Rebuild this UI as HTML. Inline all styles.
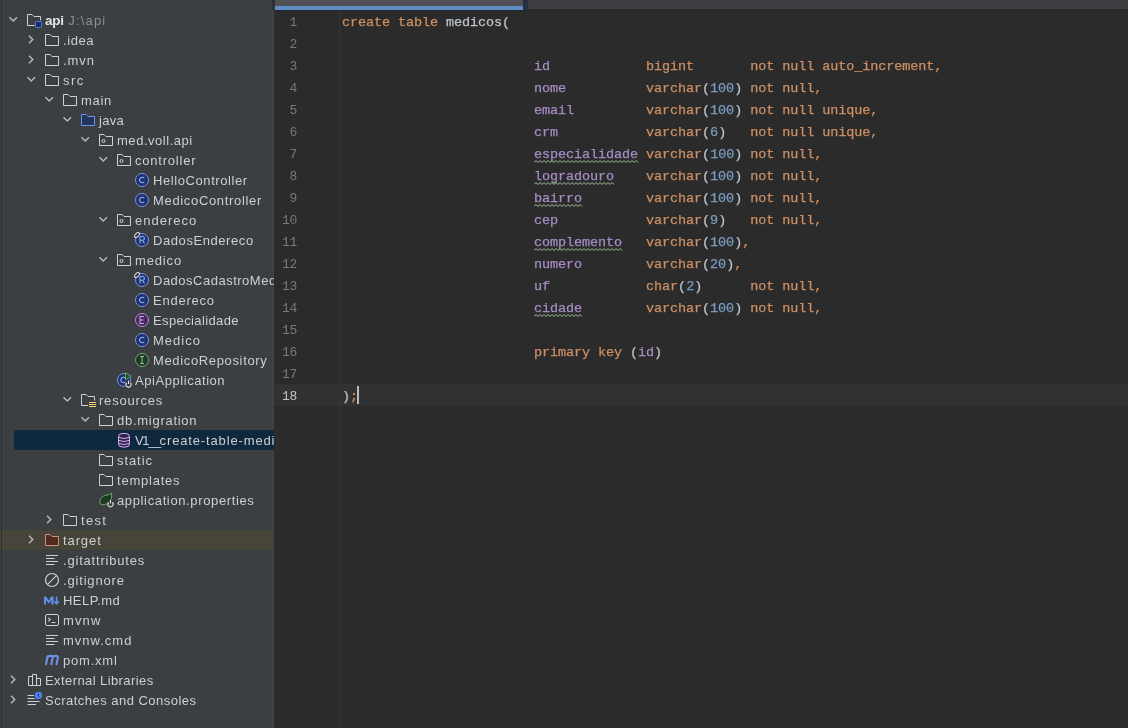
<!DOCTYPE html>
<html><head><meta charset="utf-8"><style>
*{box-sizing:border-box}
html,body{margin:0;padding:0}
body{width:1128px;height:728px;overflow:hidden;background:#2b2b2b;position:relative;font-family:"Liberation Sans",sans-serif}
#side{position:absolute;left:0;top:0;width:274px;height:728px;background:#3c3f41;overflow:hidden;will-change:transform}
#side .edge{position:absolute;left:1px;top:0;width:1px;height:728px;background:#2e3134}
#div{position:absolute;left:272px;top:0;width:2px;height:728px;background:#404142}
.row{position:absolute;left:0;width:274px;height:20px}
.ch{position:absolute;top:4px;width:12px;height:12px}
.ch svg,.ic svg{display:block}
.ic{position:absolute;top:2px;width:16px;height:16px}
.tx{position:absolute;top:1px;height:20px;line-height:20px;font-size:13px;letter-spacing:0.5px;color:#cdcfd3;white-space:nowrap}
.tx.b{font-weight:bold;font-size:13.5px;letter-spacing:-0.3px;color:#e2e4e8}
.ex{color:#8c8f94;font-weight:normal;font-size:13px;letter-spacing:1.15px;margin-left:0px}
.sel{position:absolute;left:14px;top:430px;width:264px;height:20px;background:#0e293d;border-radius:2px}
.tgt{position:absolute;left:0;top:530px;width:274px;height:20px;background:#47443a}
#tabs{position:absolute;left:274px;top:0;width:854px;height:9px;background:#3d3f42}
#tab{position:absolute;left:275px;top:0;width:253px;height:10px;background:#25303c}
#tabf{position:absolute;left:275px;top:0;width:248px;height:6px;background:#4f5157}
#tabline{position:absolute;left:275px;top:6px;width:248px;height:4px;background:#5f8ec6}
#ed{position:absolute;left:274px;top:9px;width:854px;height:719px;background:#2b2b2b}
#ed2{position:absolute;left:275px;top:10px;width:253px;height:1px;background:#1f2630}
.gl{position:absolute;left:339px;top:11px;width:1px;height:719px;background:#353535}
.curline{position:absolute;left:274px;top:384px;width:854px;height:22px;background:#323232}
.ln{position:absolute;left:274px;width:23px;text-align:right;height:22px;line-height:22px;font-family:"Liberation Mono",monospace;font-size:13px;letter-spacing:-0.3px;color:#76787b}
.ln.cur{color:#c2c3c5}
.cl{position:absolute;left:342px;height:22px;line-height:22px;font-family:"Liberation Mono",monospace;font-size:13.5px;letter-spacing:-0.1px;-webkit-text-stroke:0.25px currentColor;white-space:pre;color:#a9b7c6}
.wv{position:absolute;display:block}
#edc{position:absolute;left:0;top:0;width:1128px;height:728px;will-change:transform}
.caret{position:absolute;left:357px;top:386px;width:2px;height:18px;background:#bbbbbb}
</style></head><body>
<div id="side"><div id="div"></div>
<div class="sel"></div><div class="tgt"></div>
<div class="row" style="top:10px"><div class="ch" style="left:7px"><svg width="12" height="12" viewBox="0 0 12 12"><path d="M2.5 3.25L6.25 7L10 3.25" fill="none" stroke="#b4b6ba" stroke-width="1.5"/></svg></div><div class="ic" style="left:26px"><svg width="16" height="16" viewBox="0 0 16 16"><path d="M8.5 13.5H1.5V2.5H6L8 4.5H14.5V8.5" fill="none" stroke="#ced0d6" stroke-linejoin="round"/><rect x="9.5" y="9.5" width="6" height="6" rx="1" fill="#1b2d66" stroke="#5580e0"/></svg></div><div class="tx b" style="left:45px">api<span class="ex"> J:&#92;api</span></div></div><div class="row" style="top:30px"><div class="ch" style="left:25px"><svg width="12" height="12" viewBox="0 0 12 12"><path d="M4 1.75L7.75 5.5L4 9.25" fill="none" stroke="#b4b6ba" stroke-width="1.5"/></svg></div><div class="ic" style="left:44px"><svg width="16" height="16" viewBox="0 0 16 16"><path d="M1.5 2.5H6L8 4.5H14.5V13.5H1.5Z" fill="none" stroke="#ced0d6" stroke-linejoin="round"/></svg></div><div class="tx" style="left:63px;letter-spacing:0.575px">.idea</div></div><div class="row" style="top:50px"><div class="ch" style="left:25px"><svg width="12" height="12" viewBox="0 0 12 12"><path d="M4 1.75L7.75 5.5L4 9.25" fill="none" stroke="#b4b6ba" stroke-width="1.5"/></svg></div><div class="ic" style="left:44px"><svg width="16" height="16" viewBox="0 0 16 16"><path d="M1.5 2.5H6L8 4.5H14.5V13.5H1.5Z" fill="none" stroke="#ced0d6" stroke-linejoin="round"/></svg></div><div class="tx" style="left:63px;letter-spacing:0.900px">.mvn</div></div><div class="row" style="top:70px"><div class="ch" style="left:25px"><svg width="12" height="12" viewBox="0 0 12 12"><path d="M2.5 3.25L6.25 7L10 3.25" fill="none" stroke="#b4b6ba" stroke-width="1.5"/></svg></div><div class="ic" style="left:44px"><svg width="16" height="16" viewBox="0 0 16 16"><path d="M1.5 2.5H6L8 4.5H14.5V13.5H1.5Z" fill="none" stroke="#ced0d6" stroke-linejoin="round"/></svg></div><div class="tx" style="left:63px;letter-spacing:1.500px">src</div></div><div class="row" style="top:90px"><div class="ch" style="left:43px"><svg width="12" height="12" viewBox="0 0 12 12"><path d="M2.5 3.25L6.25 7L10 3.25" fill="none" stroke="#b4b6ba" stroke-width="1.5"/></svg></div><div class="ic" style="left:62px"><svg width="16" height="16" viewBox="0 0 16 16"><path d="M1.5 2.5H6L8 4.5H14.5V13.5H1.5Z" fill="none" stroke="#ced0d6" stroke-linejoin="round"/></svg></div><div class="tx" style="left:81px;letter-spacing:0.700px">main</div></div><div class="row" style="top:110px"><div class="ch" style="left:61px"><svg width="12" height="12" viewBox="0 0 12 12"><path d="M2.5 3.25L6.25 7L10 3.25" fill="none" stroke="#b4b6ba" stroke-width="1.5"/></svg></div><div class="ic" style="left:80px"><svg width="16" height="16" viewBox="0 0 16 16"><path d="M1.5 2.5H6L8 4.5H14.5V13.5H1.5Z" fill="#25345a" stroke="#6a95ee" stroke-linejoin="round"/></svg></div><div class="tx" style="left:99px;letter-spacing:0.300px">java</div></div><div class="row" style="top:130px"><div class="ch" style="left:79px"><svg width="12" height="12" viewBox="0 0 12 12"><path d="M2.5 3.25L6.25 7L10 3.25" fill="none" stroke="#b4b6ba" stroke-width="1.5"/></svg></div><div class="ic" style="left:98px"><svg width="16" height="16" viewBox="0 0 16 16"><path d="M1.5 2.5H6L8 4.5H14.5V13.5H1.5Z" fill="none" stroke="#ced0d6" stroke-linejoin="round"/><circle cx="5.5" cy="9" r="1.5" fill="none" stroke="#ced0d6"/></svg></div><div class="tx" style="left:117px;letter-spacing:0.536px">med.voll.api</div></div><div class="row" style="top:150px"><div class="ch" style="left:97px"><svg width="12" height="12" viewBox="0 0 12 12"><path d="M2.5 3.25L6.25 7L10 3.25" fill="none" stroke="#b4b6ba" stroke-width="1.5"/></svg></div><div class="ic" style="left:116px"><svg width="16" height="16" viewBox="0 0 16 16"><path d="M1.5 2.5H6L8 4.5H14.5V13.5H1.5Z" fill="none" stroke="#ced0d6" stroke-linejoin="round"/><circle cx="5.5" cy="9" r="1.5" fill="none" stroke="#ced0d6"/></svg></div><div class="tx" style="left:135px;letter-spacing:0.778px">controller</div></div><div class="row" style="top:170px"><div class="ic" style="left:134px"><svg width="16" height="16" viewBox="0 0 16 16"><circle cx="8" cy="8" r="6.5" fill="#1f3170" stroke="#7897dc"/><path d="M10.3 6.2A2.7 2.7 0 1 0 10.3 9.8" fill="none" stroke="#8fb0f5" stroke-width="1.1"/></svg></div><div class="tx" style="left:153px;letter-spacing:0.586px">HelloController</div></div><div class="row" style="top:190px"><div class="ic" style="left:134px"><svg width="16" height="16" viewBox="0 0 16 16"><circle cx="8" cy="8" r="6.5" fill="#1f3170" stroke="#7897dc"/><path d="M10.3 6.2A2.7 2.7 0 1 0 10.3 9.8" fill="none" stroke="#8fb0f5" stroke-width="1.1"/></svg></div><div class="tx" style="left:153px;letter-spacing:0.667px">MedicoController</div></div><div class="row" style="top:210px"><div class="ch" style="left:97px"><svg width="12" height="12" viewBox="0 0 12 12"><path d="M2.5 3.25L6.25 7L10 3.25" fill="none" stroke="#b4b6ba" stroke-width="1.5"/></svg></div><div class="ic" style="left:116px"><svg width="16" height="16" viewBox="0 0 16 16"><path d="M1.5 2.5H6L8 4.5H14.5V13.5H1.5Z" fill="none" stroke="#ced0d6" stroke-linejoin="round"/><circle cx="5.5" cy="9" r="1.5" fill="none" stroke="#ced0d6"/></svg></div><div class="tx" style="left:135px;letter-spacing:1.000px">endereco</div></div><div class="row" style="top:230px"><div class="ic" style="left:134px"><svg width="16" height="16" viewBox="0 0 16 16"><circle cx="8" cy="8" r="6.5" fill="#1f3170" stroke="#7897dc"/><path d="M6 11.5V4.5H8.5A1.9 1.9 0 0 1 8.5 8.3H6M8.3 8.3L10.5 11.5" fill="none" stroke="#8fb0f5" stroke-width="1.1"/><ellipse cx="3" cy="3" rx="3" ry="1.7" transform="rotate(-45 3 3)" fill="#3c3f41" stroke="#e0e0e0" stroke-width="1"/></svg></div><div class="tx" style="left:153px;letter-spacing:0.575px">DadosEndereco</div></div><div class="row" style="top:250px"><div class="ch" style="left:97px"><svg width="12" height="12" viewBox="0 0 12 12"><path d="M2.5 3.25L6.25 7L10 3.25" fill="none" stroke="#b4b6ba" stroke-width="1.5"/></svg></div><div class="ic" style="left:116px"><svg width="16" height="16" viewBox="0 0 16 16"><path d="M1.5 2.5H6L8 4.5H14.5V13.5H1.5Z" fill="none" stroke="#ced0d6" stroke-linejoin="round"/><circle cx="5.5" cy="9" r="1.5" fill="none" stroke="#ced0d6"/></svg></div><div class="tx" style="left:135px;letter-spacing:0.860px">medico</div></div><div class="row" style="top:270px"><div class="ic" style="left:134px"><svg width="16" height="16" viewBox="0 0 16 16"><circle cx="8" cy="8" r="6.5" fill="#1f3170" stroke="#7897dc"/><path d="M6 11.5V4.5H8.5A1.9 1.9 0 0 1 8.5 8.3H6M8.3 8.3L10.5 11.5" fill="none" stroke="#8fb0f5" stroke-width="1.1"/><ellipse cx="3" cy="3" rx="3" ry="1.7" transform="rotate(-45 3 3)" fill="#3c3f41" stroke="#e0e0e0" stroke-width="1"/></svg></div><div class="tx" style="left:153px">DadosCadastroMedico</div></div><div class="row" style="top:290px"><div class="ic" style="left:134px"><svg width="16" height="16" viewBox="0 0 16 16"><circle cx="8" cy="8" r="6.5" fill="#1f3170" stroke="#7897dc"/><path d="M10.3 6.2A2.7 2.7 0 1 0 10.3 9.8" fill="none" stroke="#8fb0f5" stroke-width="1.1"/></svg></div><div class="tx" style="left:153px;letter-spacing:0.771px">Endereco</div></div><div class="row" style="top:310px"><div class="ic" style="left:134px"><svg width="16" height="16" viewBox="0 0 16 16"><circle cx="8" cy="8" r="6.5" fill="#46285c" stroke="#b48cd6"/><path d="M10 4.5H6V11.5H10M6 8H9.5" fill="none" stroke="#c9a3ec" stroke-width="1.1"/></svg></div><div class="tx" style="left:153px;letter-spacing:0.383px">Especialidade</div></div><div class="row" style="top:330px"><div class="ic" style="left:134px"><svg width="16" height="16" viewBox="0 0 16 16"><circle cx="8" cy="8" r="6.5" fill="#1f3170" stroke="#7897dc"/><path d="M10.3 6.2A2.7 2.7 0 1 0 10.3 9.8" fill="none" stroke="#8fb0f5" stroke-width="1.1"/></svg></div><div class="tx" style="left:153px;letter-spacing:1.020px">Medico</div></div><div class="row" style="top:350px"><div class="ic" style="left:134px"><svg width="16" height="16" viewBox="0 0 16 16"><circle cx="8" cy="8" r="6.5" fill="#1f3a24" stroke="#6ea676"/><path d="M6 4.5H10M6 11.5H10M8 4.5V11.5" fill="none" stroke="#86c08e" stroke-width="1.1"/></svg></div><div class="tx" style="left:153px;letter-spacing:0.647px">MedicoRepository</div></div><div class="row" style="top:370px"><div class="ic" style="left:116px"><svg width="16" height="16" viewBox="0 0 16 16"><circle cx="8" cy="8" r="6.5" fill="#1f3170" stroke="#7897dc"/><path d="M9.5 6.2A2.7 2.7 0 1 0 9.5 9.8" fill="none" stroke="#8fb0f5" stroke-width="1.1"/><path d="M9.5 0.8L15.3 4.2L9.5 7.6Z" fill="#1e4a25" stroke="#62a86c" stroke-linejoin="round"/><circle cx="12.5" cy="12.8" r="3.6" fill="#3c3f41"/><path d="M10.6 10.8A2.6 2.6 0 1 0 14.4 10.8" fill="none" stroke="#e6e6e6" stroke-width="1.1"/><path d="M12.5 8.6V12" stroke="#e6e6e6" stroke-width="1.1"/></svg></div><div class="tx" style="left:135px;letter-spacing:0.554px">ApiApplication</div></div><div class="row" style="top:390px"><div class="ch" style="left:61px"><svg width="12" height="12" viewBox="0 0 12 12"><path d="M2.5 3.25L6.25 7L10 3.25" fill="none" stroke="#b4b6ba" stroke-width="1.5"/></svg></div><div class="ic" style="left:80px"><svg width="16" height="16" viewBox="0 0 16 16"><path d="M8 13.5H1.5V2.5H6L8 4.5H14.5V8.5" fill="none" stroke="#ced0d6" stroke-linejoin="round"/><path d="M9 10.5H16M9 12.5H16M9 14.5H16" stroke="#f0d27a" stroke-width="1.2"/></svg></div><div class="tx" style="left:99px;letter-spacing:0.787px">resources</div></div><div class="row" style="top:410px"><div class="ch" style="left:79px"><svg width="12" height="12" viewBox="0 0 12 12"><path d="M2.5 3.25L6.25 7L10 3.25" fill="none" stroke="#b4b6ba" stroke-width="1.5"/></svg></div><div class="ic" style="left:98px"><svg width="16" height="16" viewBox="0 0 16 16"><path d="M1.5 2.5H6L8 4.5H14.5V13.5H1.5Z" fill="none" stroke="#ced0d6" stroke-linejoin="round"/></svg></div><div class="tx" style="left:117px;letter-spacing:0.727px">db.migration</div></div><div class="row" style="top:430px"><div class="ic" style="left:116px"><svg width="16" height="16" viewBox="0 0 16 16"><rect x="2.5" y="1.5" width="11" height="13.5" rx="3.5" fill="#33204f" stroke="#cdb3f3"/><path d="M3 5.5Q8 7.5 13 5.5M3 8.5Q8 10.5 13 8.5M3 11.5Q8 13.5 13 11.5" fill="none" stroke="#cdb3f3"/></svg></div><div class="tx" style="left:135px;letter-spacing:0.860px"><span style="letter-spacing:-1.3px">V1</span><span style="letter-spacing:-1.6px">__</span>create-table-medicos.sql</div></div><div class="row" style="top:450px"><div class="ic" style="left:98px"><svg width="16" height="16" viewBox="0 0 16 16"><path d="M1.5 2.5H6L8 4.5H14.5V13.5H1.5Z" fill="none" stroke="#ced0d6" stroke-linejoin="round"/></svg></div><div class="tx" style="left:117px;letter-spacing:0.920px">static</div></div><div class="row" style="top:470px"><div class="ic" style="left:98px"><svg width="16" height="16" viewBox="0 0 16 16"><path d="M1.5 2.5H6L8 4.5H14.5V13.5H1.5Z" fill="none" stroke="#ced0d6" stroke-linejoin="round"/></svg></div><div class="tx" style="left:117px;letter-spacing:0.775px">templates</div></div><div class="row" style="top:490px"><div class="ic" style="left:98px"><svg width="16" height="16" viewBox="0 0 16 16"><path d="M2.8 12.5C0.5 9 2.5 4 8.5 3.2C11 2.8 12.5 2 13.5 1C14.5 6.5 12.5 11.5 6.5 12.5C5 12.8 3.8 12.8 2.8 12.5Z" fill="#1b3a1f" stroke="#6aa872"/><circle cx="12.5" cy="12.5" r="3.8" fill="#3c3f41"/><path d="M10.6 10.5A2.6 2.6 0 1 0 14.4 10.5" fill="none" stroke="#e6e6e6" stroke-width="1.1"/><path d="M12.5 8V11.5" stroke="#e6e6e6" stroke-width="1.1"/></svg></div><div class="tx" style="left:117px;letter-spacing:0.633px">application.properties</div></div><div class="row" style="top:510px"><div class="ch" style="left:43px"><svg width="12" height="12" viewBox="0 0 12 12"><path d="M4 1.75L7.75 5.5L4 9.25" fill="none" stroke="#b4b6ba" stroke-width="1.5"/></svg></div><div class="ic" style="left:62px"><svg width="16" height="16" viewBox="0 0 16 16"><path d="M1.5 2.5H6L8 4.5H14.5V13.5H1.5Z" fill="none" stroke="#ced0d6" stroke-linejoin="round"/></svg></div><div class="tx" style="left:81px;letter-spacing:1.333px">test</div></div><div class="row" style="top:530px"><div class="ch" style="left:25px"><svg width="12" height="12" viewBox="0 0 12 12"><path d="M4 1.75L7.75 5.5L4 9.25" fill="none" stroke="#b4b6ba" stroke-width="1.5"/></svg></div><div class="ic" style="left:44px"><svg width="16" height="16" viewBox="0 0 16 16"><path d="M1.5 2.5H6L8 4.5H14.5V13.5H1.5Z" fill="#52291d" stroke="#d09078" stroke-linejoin="round"/></svg></div><div class="tx" style="left:63px;letter-spacing:0.900px">target</div></div><div class="row" style="top:550px"><div class="ic" style="left:44px"><svg width="16" height="16" viewBox="0 0 16 16"><path d="M2 3.5H14M2 6.5H10.5M2 9.5H14M2 12.5H10.5" stroke="#ced0d6"/></svg></div><div class="tx" style="left:63px;letter-spacing:0.800px">.gitattributes</div></div><div class="row" style="top:570px"><div class="ic" style="left:44px"><svg width="16" height="16" viewBox="0 0 16 16"><circle cx="8" cy="8" r="6.5" fill="none" stroke="#ced0d6" stroke-width="1.2"/><path d="M3.6 12.4L12.4 3.6" stroke="#ced0d6" stroke-width="1.1"/></svg></div><div class="tx" style="left:63px;letter-spacing:0.822px">.gitignore</div></div><div class="row" style="top:590px"><div class="ic" style="left:44px"><svg width="16" height="16" viewBox="0 0 16 16"><path d="M-0.2 12.6V4.4H2.2L4.7 8.4L7.2 4.4H9.6V12.6H7.4V8L4.7 11.6L2 8V12.6Z" fill="#5f8fea"/><path d="M12.6 4.4V11.6M10.3 9.2L12.6 11.8L14.9 9.2" fill="none" stroke="#5f8fea" stroke-width="1.5"/></svg></div><div class="tx" style="left:63px;letter-spacing:0.467px">HELP.md</div></div><div class="row" style="top:610px"><div class="ic" style="left:44px"><svg width="16" height="16" viewBox="0 0 16 16"><rect x="1.5" y="2.5" width="13" height="11" rx="1.5" fill="none" stroke="#ced0d6"/><path d="M4.2 5.8L6.3 7.6L4.2 9.4" fill="none" stroke="#ced0d6" stroke-width="1.1"/><path d="M7.5 10.5H11.5" stroke="#ced0d6"/></svg></div><div class="tx" style="left:63px;letter-spacing:1.133px">mvnw</div></div><div class="row" style="top:630px"><div class="ic" style="left:44px"><svg width="16" height="16" viewBox="0 0 16 16"><path d="M2 3.5H14M2 6.5H10.5M2 9.5H14M2 12.5H10.5" stroke="#ced0d6"/></svg></div><div class="tx" style="left:63px;letter-spacing:1.000px">mvnw.cmd</div></div><div class="row" style="top:650px"><div class="ic" style="left:44px"><svg width="16" height="16" viewBox="0 0 16 16"><path d="M2 12.2L3.6 4.2M3.5 4.6C4.3 4.1 5.3 3.9 6.7 3.9C8.2 3.9 8.9 4.5 8.7 5.6L7.3 12.2M8.7 4.6C9.5 4.1 10.5 3.9 11.9 3.9C13.4 3.9 14.1 4.5 13.9 5.6L12.5 12.2" fill="none" stroke="#6d92e6" stroke-width="2.1" stroke-linecap="round"/></svg></div><div class="tx" style="left:63px;letter-spacing:0.783px">pom.xml</div></div><div class="row" style="top:670px"><div class="ch" style="left:7px"><svg width="12" height="12" viewBox="0 0 12 12"><path d="M4 1.75L7.75 5.5L4 9.25" fill="none" stroke="#b4b6ba" stroke-width="1.5"/></svg></div><div class="ic" style="left:26px"><svg width="16" height="16" viewBox="0 0 16 16"><path d="M2.5 13.5V4.5H6.5V13.5M6.5 13.5V2.5H10.5V13.5M10.5 13.5V6.5H14.5V13.5H2.5" fill="none" stroke="#ced0d6" stroke-linejoin="round"/></svg></div><div class="tx" style="left:45px;letter-spacing:0.412px">External Libraries</div></div><div class="row" style="top:690px"><div class="ch" style="left:7px"><svg width="12" height="12" viewBox="0 0 12 12"><path d="M4 1.75L7.75 5.5L4 9.25" fill="none" stroke="#b4b6ba" stroke-width="1.5"/></svg></div><div class="ic" style="left:26px"><svg width="16" height="16" viewBox="0 0 16 16"><path d="M1.5 3.5H8M1.5 6.5H8.5M1.5 9.5H13.5M1.5 12.5H10" stroke="#ced0d6"/><circle cx="12.5" cy="3.5" r="3.8" fill="#4d7fee"/><path d="M12.3 1.8V3.8L13.6 5" stroke="#1a2440" fill="none" stroke-width="0.9"/></svg></div><div class="tx" style="left:45px;letter-spacing:0.481px">Scratches and Consoles</div></div>
<div class="edge"></div></div>
<div id="tabs"></div>
<div id="ed"></div><div style="position:absolute;left:272px;top:0;width:3px;height:10px;background:#2c3136"></div><div id="tab"></div><div id="tabf"></div><div id="tabline"></div><div id="ed2"></div>
<div id="edc"><div class="curline"></div>
<div class="gl"></div>
<div class="ln" style="top:11.5px">1</div><div class="ln" style="top:33.5px">2</div><div class="ln" style="top:55.5px">3</div><div class="ln" style="top:77.5px">4</div><div class="ln" style="top:99.5px">5</div><div class="ln" style="top:121.5px">6</div><div class="ln" style="top:143.5px">7</div><div class="ln" style="top:165.5px">8</div><div class="ln" style="top:187.5px">9</div><div class="ln" style="top:209.5px">10</div><div class="ln" style="top:231.5px">11</div><div class="ln" style="top:253.5px">12</div><div class="ln" style="top:275.5px">13</div><div class="ln" style="top:297.5px">14</div><div class="ln" style="top:319.5px">15</div><div class="ln" style="top:341.5px">16</div><div class="ln" style="top:363.5px">17</div><div class="ln cur" style="top:385.5px">18</div>
<div class="cl" style="top:11.5px"><span style="color:#cc8f64">create table </span><span style="color:#bcc3ca">medicos(</span></div><div class="cl" style="top:33.5px"></div><div class="cl" style="top:55.5px">                        <span style="color:#a58dc2">id</span>            <span style="color:#cc8f64">bigint</span>       <span style="color:#cc8f64">not null auto_increment,</span></div><div class="cl" style="top:77.5px">                        <span style="color:#a58dc2">nome</span>          <span style="color:#cc8f64">varchar</span><span style="color:#bcc3ca">(</span><span style="color:#7a9cc0">100</span><span style="color:#bcc3ca">)</span> <span style="color:#cc8f64">not null,</span></div><div class="cl" style="top:99.5px">                        <span style="color:#a58dc2">email</span>         <span style="color:#cc8f64">varchar</span><span style="color:#bcc3ca">(</span><span style="color:#7a9cc0">100</span><span style="color:#bcc3ca">)</span> <span style="color:#cc8f64">not null unique,</span></div><div class="cl" style="top:121.5px">                        <span style="color:#a58dc2">crm</span>           <span style="color:#cc8f64">varchar</span><span style="color:#bcc3ca">(</span><span style="color:#7a9cc0">6</span><span style="color:#bcc3ca">)</span>   <span style="color:#cc8f64">not null unique,</span></div><div class="cl" style="top:143.5px">                        <span style="color:#a58dc2">especialidade</span> <span style="color:#cc8f64">varchar</span><span style="color:#bcc3ca">(</span><span style="color:#7a9cc0">100</span><span style="color:#bcc3ca">)</span> <span style="color:#cc8f64">not null,</span></div><div class="cl" style="top:165.5px">                        <span style="color:#a58dc2">logradouro</span>    <span style="color:#cc8f64">varchar</span><span style="color:#bcc3ca">(</span><span style="color:#7a9cc0">100</span><span style="color:#bcc3ca">)</span> <span style="color:#cc8f64">not null,</span></div><div class="cl" style="top:187.5px">                        <span style="color:#a58dc2">bairro</span>        <span style="color:#cc8f64">varchar</span><span style="color:#bcc3ca">(</span><span style="color:#7a9cc0">100</span><span style="color:#bcc3ca">)</span> <span style="color:#cc8f64">not null,</span></div><div class="cl" style="top:209.5px">                        <span style="color:#a58dc2">cep</span>           <span style="color:#cc8f64">varchar</span><span style="color:#bcc3ca">(</span><span style="color:#7a9cc0">9</span><span style="color:#bcc3ca">)</span>   <span style="color:#cc8f64">not null,</span></div><div class="cl" style="top:231.5px">                        <span style="color:#a58dc2">complemento</span>   <span style="color:#cc8f64">varchar</span><span style="color:#bcc3ca">(</span><span style="color:#7a9cc0">100</span><span style="color:#bcc3ca">)</span><span style="color:#cc8f64">,</span></div><div class="cl" style="top:253.5px">                        <span style="color:#a58dc2">numero</span>        <span style="color:#cc8f64">varchar</span><span style="color:#bcc3ca">(</span><span style="color:#7a9cc0">20</span><span style="color:#bcc3ca">)</span><span style="color:#cc8f64">,</span></div><div class="cl" style="top:275.5px">                        <span style="color:#a58dc2">uf</span>            <span style="color:#cc8f64">char</span><span style="color:#bcc3ca">(</span><span style="color:#7a9cc0">2</span><span style="color:#bcc3ca">)</span>      <span style="color:#cc8f64">not null,</span></div><div class="cl" style="top:297.5px">                        <span style="color:#a58dc2">cidade</span>        <span style="color:#cc8f64">varchar</span><span style="color:#bcc3ca">(</span><span style="color:#7a9cc0">100</span><span style="color:#bcc3ca">)</span> <span style="color:#cc8f64">not null,</span></div><div class="cl" style="top:319.5px"></div><div class="cl" style="top:341.5px">                        <span style="color:#cc8f64">primary key </span><span style="color:#bcc3ca">(</span><span style="color:#a58dc2">id</span><span style="color:#bcc3ca">)</span></div><div class="cl" style="top:363.5px"></div><div class="cl" style="top:385.5px"><span style="color:#bcc3ca">)</span><span style="color:#cc8f64">;</span></div>
<svg class="wv" style="left:534px;top:160.0px" width="105" height="4" viewBox="0 -0.5 105 4"><polyline points="0,2 2,0 4,2 6,0 8,2 10,0 12,2 14,0 16,2 18,0 20,2 22,0 24,2 26,0 28,2 30,0 32,2 34,0 36,2 38,0 40,2 42,0 44,2 46,0 48,2 50,0 52,2 54,0 56,2 58,0 60,2 62,0 64,2 66,0 68,2 70,0 72,2 74,0 76,2 78,0 80,2 82,0 84,2 86,0 88,2 90,0 92,2 94,0 96,2 98,0 100,2 102,0 104,2" fill="none" stroke="#a2c29a" stroke-width="1"/></svg><svg class="wv" style="left:534px;top:182.0px" width="81" height="4" viewBox="0 -0.5 81 4"><polyline points="0,2 2,0 4,2 6,0 8,2 10,0 12,2 14,0 16,2 18,0 20,2 22,0 24,2 26,0 28,2 30,0 32,2 34,0 36,2 38,0 40,2 42,0 44,2 46,0 48,2 50,0 52,2 54,0 56,2 58,0 60,2 62,0 64,2 66,0 68,2 70,0 72,2 74,0 76,2 78,0 80,2" fill="none" stroke="#a2c29a" stroke-width="1"/></svg><svg class="wv" style="left:534px;top:204.0px" width="49" height="4" viewBox="0 -0.5 49 4"><polyline points="0,2 2,0 4,2 6,0 8,2 10,0 12,2 14,0 16,2 18,0 20,2 22,0 24,2 26,0 28,2 30,0 32,2 34,0 36,2 38,0 40,2 42,0 44,2 46,0 48,2" fill="none" stroke="#a2c29a" stroke-width="1"/></svg><svg class="wv" style="left:534px;top:248.0px" width="89" height="4" viewBox="0 -0.5 89 4"><polyline points="0,2 2,0 4,2 6,0 8,2 10,0 12,2 14,0 16,2 18,0 20,2 22,0 24,2 26,0 28,2 30,0 32,2 34,0 36,2 38,0 40,2 42,0 44,2 46,0 48,2 50,0 52,2 54,0 56,2 58,0 60,2 62,0 64,2 66,0 68,2 70,0 72,2 74,0 76,2 78,0 80,2 82,0 84,2 86,0 88,2" fill="none" stroke="#a2c29a" stroke-width="1"/></svg><svg class="wv" style="left:534px;top:314.0px" width="49" height="4" viewBox="0 -0.5 49 4"><polyline points="0,2 2,0 4,2 6,0 8,2 10,0 12,2 14,0 16,2 18,0 20,2 22,0 24,2 26,0 28,2 30,0 32,2 34,0 36,2 38,0 40,2 42,0 44,2 46,0 48,2" fill="none" stroke="#a2c29a" stroke-width="1"/></svg>
<div class="caret"></div></div>
</body></html>
